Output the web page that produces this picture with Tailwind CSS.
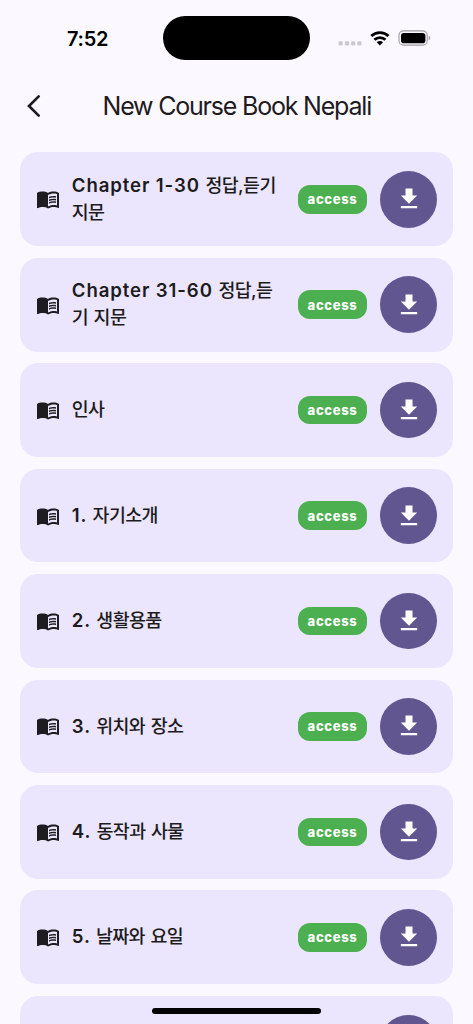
<!DOCTYPE html>
<html lang="ko">
<head>
<meta charset="utf-8">
<title>New Course Book Nepali</title>
<script src="https://cdn.jsdelivr.net/npm/@tailwindcss/browser@4"></script>
</head>
<body class="w-[473px] h-[1024px] overflow-hidden bg-[#fcf8ff] text-[#1d1b20] font-['Inter','Noto_Sans_CJK_KR',sans-serif]">
<svg class="hidden">
  <symbol id="book" viewBox="0 0 24 24"><path fill-rule="evenodd" d="M21 5c-1.11-.35-2.33-.5-3.5-.5-1.95 0-4.05.4-5.5 1.5-1.45-1.1-3.55-1.5-5.5-1.5S2.45 4.9 1 6v14.65c0 .25.25.5.5.5.1 0 .15-.05.25-.05C3.1 20.45 5.05 20 6.5 20c1.95 0 4.05.4 5.5 1.5 1.35-.85 3.8-1.5 5.5-1.5 1.65 0 3.35.3 4.75 1.05.1.05.15.05.25.05.25 0 .5-.25.5-.5V6c-.6-.45-1.25-.75-2-1zm0 13.5c-1.1-.35-2.3-.5-3.5-.5-1.7 0-4.15.65-5.5 1.5V8c1.35-.85 3.8-1.5 5.5-1.5 1.2 0 2.4.15 3.5.5v11.5z"/><path d="M17.5 10.5c.88 0 1.73.09 2.5.26V9.24c-.79-.15-1.64-.24-2.5-.24-1.7 0-3.24.29-4.5.83v1.66c1.13-.64 2.7-.99 4.5-.99zM13 12.49v1.66c1.13-.64 2.7-.99 4.5-.99.88 0 1.73.09 2.5.26V11.9c-.79-.15-1.64-.24-2.5-.24-1.7 0-3.24.3-4.5.83zM17.5 14.33c-1.7 0-3.24.29-4.5.83v1.66c1.13-.64 2.7-.99 4.5-.99.88 0 1.73.09 2.5.26v-1.52c-.79-.16-1.64-.24-2.5-.24z"/></symbol>
  <symbol id="download" viewBox="0 0 24 24"><path d="M19 9h-4V3H9v6H5l7 7 7-7zM5 18v2h14v-2H5z"/></symbol>
</svg>
<div class="relative h-full overflow-hidden flex flex-col">
  <header class="h-[76px] shrink-0 flex items-center text-black">
    <div class="w-[163px] pl-[67px] pt-px text-[20px] font-semibold leading-none tracking-[-0.3px]">7:52</div>
    <div class="w-[147px] h-[44px] rounded-full bg-black"></div>
    <svg class="ml-[28px]" width="94" height="20" viewBox="338 28 94 20">
      <g fill="#cbc8ce"><rect x="338.6" y="41.3" width="4.2" height="4.2" rx="1.3"/><rect x="344.9" y="41.3" width="4.2" height="4.2" rx="1.3"/><rect x="351.1" y="41.3" width="4.2" height="4.2" rx="1.3"/><rect x="357.3" y="41.3" width="4.2" height="4.2" rx="1.3"/></g>
      <g fill="none" stroke="#000" stroke-width="2.8"><path d="M371.3 36.1a12.4 12.4 0 0 1 17.2 0"/><path d="M374.4 39.8a7.8 7.8 0 0 1 11 0"/></g>
      <path d="M376.7 42.3a4.6 4.6 0 0 1 6.4 0l-3.2 3.1z"/>
      <rect x="399" y="30.9" width="28.2" height="14.2" rx="4.4" fill="none" stroke="#a09da2" stroke-width="1.1"/>
      <rect x="401" y="32.9" width="24.4" height="10.3" rx="2.8"/>
      <path d="M428.7 36v4.2q1.7-.7 1.7-2.1t-1.7-2.1z" fill="#a09da2"/>
    </svg>
  </header>
  <nav class="h-[76.4px] shrink-0 flex items-center pb-[16px]">
    <svg class="ml-[24px]" width="20" height="26" viewBox="0 0 20 26" fill="none" stroke="#1d1b20" stroke-width="2.7" stroke-linecap="round" stroke-linejoin="miter"><path d="M14.7 3.4 5 13l9.7 9.6"/></svg>
    <h1 class="ml-[58.5px] text-[25px] leading-none font-[380] tracking-[-1.2px] whitespace-nowrap">New Course Book Nepali</h1>
  </nav>
  <main id="list" class="flex flex-col gap-[11.7px] pl-[20px] pr-[20px]"></main>
  <div class="absolute left-[152px] top-[1008.3px] w-[169px] h-[6px] rounded-full bg-black"></div>
</div>
<script>
const ko = t => `<span class="text-[18.4px] font-medium tracking-[-0.6px] [word-spacing:1.2px]">${t}</span>`;
const rows = [
  'Chapter 1-30 ' + ko('정답,듣기<br>지문'),
  'Chapter 31-60 ' + ko('정답,듣<br>기 지문'),
  ko('인사'),
  '1. ' + ko('자기소개'),
  '2. ' + ko('생활용품'),
  '3. ' + ko('위치와 장소'),
  '4. ' + ko('동작과 사물'),
  '5. ' + ko('날짜와 요일'),
  ''
];
document.getElementById('list').innerHTML = rows.map(t => `
  <div class="h-[93.75px] shrink-0 flex items-center rounded-[18px] bg-[#ebe6fe] pl-[16px] pr-[16px]">
    <svg class="w-[24px] h-[24px] shrink-0" fill="#1e1c20"><use href="#book"/></svg>
    <div class="ml-[11.8px] mr-[0.2px] w-[226px] shrink-0 pb-[0.6px] text-[18.6px] leading-[27.2px] font-[630] tracking-[0.9px] whitespace-nowrap">${t}</div>
    <div class="w-[69px] h-[28.5px] shrink-0 flex items-center justify-center rounded-[12px] bg-[#4caf50] text-white text-[13px] pt-px font-extrabold leading-none tracking-[0.65px]">${t && 'access'}</div>
    <div class="ml-[13.5px] w-[56.5px] h-[56.5px] shrink-0 flex items-center justify-center rounded-full bg-[#625690]">
      <svg class="w-[28px] h-[28px]" fill="#fff"><use href="#download"/></svg>
    </div>
  </div>`).join('');
</script>
</body>
</html>
